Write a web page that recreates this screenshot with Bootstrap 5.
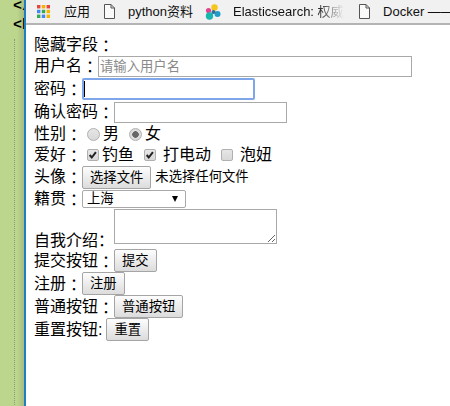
<!DOCTYPE html>
<html lang="zh">
<head>
<meta charset="utf-8">
<title>表单</title>
<link href="https://cdn.jsdelivr.net/npm/bootstrap@5.3.0/dist/css/bootstrap.min.css" rel="stylesheet">
<style>
html,body{height:100%;margin:0;overflow:hidden}
body{font-family:"Liberation Sans","Noto Sans CJK SC",sans-serif;font-size:16px;color:#000;background:#fff}
.shell{height:406px}
.gutter{width:24px;flex:none;background:linear-gradient(90deg,#bdd68d 0,#bdd68d 70%,#a9bd7e 100%);font:bold 15px/19px "Liberation Mono",monospace;color:#000;padding:0 0 0 13px;overflow:hidden;white-space:nowrap}
.gut-lines{margin-top:-3px}
.gutter-dots{margin:4px 0 0 1px;border-left:1px dotted #8a9a80;height:370px}
.mainpane{flex:1;min-width:0;border-left:2px solid #1f7fc0}
.bookbar{height:25px;background:#f1f1f1;border-bottom:2px solid #b4b4b4;font-size:13px;color:#111;white-space:nowrap;overflow:hidden;padding-left:11px}
.bookbar>*{flex:none}
.bookbar span{line-height:22px}
.ico-apps{margin-right:14px}
.ico-doc{margin:0 13px 0 14px}
.ico-doc-b{margin:0 13px 0 15px}
.ico-dots{margin:0 12px 0 12px}
.fade-text{width:111px;overflow:hidden;-webkit-mask-image:linear-gradient(90deg,#000 75%,transparent);mask-image:linear-gradient(90deg,#000 75%,transparent)}
.formpane{padding:9.5px 0 0 8px;line-height:18px}
.frow{display:flex;align-items:center;white-space:nowrap;height:21px}
.h-wide{height:25px}
.h-mid{height:23px}
.h-slim{height:19px}
.frow-ta{align-items:flex-start;height:40.5px}
.ta-label{margin-top:21.5px}
.col-mark{font-family:"Noto Sans CJK TC",sans-serif}
.tin{box-sizing:border-box;height:21px;border:1px solid #a9a9a9;padding:1px 1px;font-size:13.33px;outline:0;background:#fff}
.tin::placeholder{color:#8a8a8a;opacity:1}
.tin-long{width:314px}
.tin-short{width:173px}
.tin-focus{border:2px solid #7ea6e8;border-radius:2px;height:22px}
.caret-mark{border-left:1px solid #000;height:16px;margin-left:-171px;margin-right:170px}
.rd,.ck{appearance:none;-webkit-appearance:none;margin:0;flex:none;height:12px;border:1px solid #b0b0b0;background:linear-gradient(#e6e6e6,#d8d8d8)}
.rd{width:13px;height:13px;border-radius:50%}
.rd:checked{background:radial-gradient(circle,#666 0 3px,#dcdcdc 3.5px)}
.ck{width:12px;border-radius:2px}
.ck:checked{background:url("data:image/svg+xml,%3Csvg xmlns='http://www.w3.org/2000/svg' viewBox='0 0 12 12'%3E%3Cpath d='M2 6l2.500 3 5-6.500' fill='none' stroke='%23222' stroke-width='2.400'/%3E%3C/svg%3E") center/100% no-repeat,linear-gradient(#e6e6e6,#d8d8d8)}
.oldbtn{box-sizing:border-box;height:23px;padding:0 7px;font-size:13.33px;line-height:19px;color:#000;background:linear-gradient(#fdfdfd,#dcdcdc);border:1px solid #a5a5a5;border-radius:2px}
.filetxt{font-size:13.33px;margin-left:4px}
.oldsel{box-sizing:border-box;width:104px;height:18px;border:1px solid #a9a9a9;border-radius:2px;background:#fff;font-size:13.33px;line-height:16px;padding:0 4px;display:flex;justify-content:space-between;align-items:center}
.sel-arrow{width:0;height:0;border:3.500px solid transparent;border-top:6px solid #000;border-bottom:0;margin-right:3px}
.tarea{box-sizing:border-box;width:163px;height:35px;border:1px solid #a9a9a9;resize:both;outline:0;display:block}
.gap-s{margin-left:3px}
.gap-m{margin-left:7px}
.gap-l{margin-left:10px}
.first-tick{margin-left:5px}
.reset-gap{margin-left:4px}
</style>
</head>
<body>
<div class="d-flex shell">
  <div class="gutter">
    <div class="gut-lines">&lt;/</div>
    <div>&lt;b</div>
    <div class="gutter-dots"></div>
  </div>
  <div class="mainpane">
    <div class="d-flex align-items-center bookbar">
      <svg class="ico-apps" width="13" height="13" viewBox="0 0 13 13"><g>
        <rect width="3.400" height="3.400" fill="#e8453c"/><rect x="4.800" width="3.400" height="3.400" fill="#f4b400"/><rect x="9.600" width="3.400" height="3.400" fill="#e8453c"/>
        <rect y="4.800" width="3.400" height="3.400" fill="#4285f4"/><rect x="4.800" y="4.800" width="3.400" height="3.400" fill="#34a853"/><rect x="9.600" y="4.800" width="3.400" height="3.400" fill="#f4b400"/>
        <rect y="9.600" width="3.400" height="3.400" fill="#34a853"/><rect x="4.800" y="9.600" width="3.400" height="3.400" fill="#4285f4"/><rect x="9.600" y="9.600" width="3.400" height="3.400" fill="#f4b400"/></g></svg>
      <span>应用</span>
      <svg class="ico-doc" width="11" height="15" viewBox="0 0 11 15"><path d="M.5.500h6.500l3.500 3.500v10.500h-10zM7 .5v3.500h3.500" fill="#fafafa" stroke="#555"/></svg>
      <span>python资料</span>
      <svg class="ico-dots" width="16" height="16" viewBox="0 0 16 16"><circle cx="9.500" cy="3.500" r="3.200" fill="#f5c518"/><circle cx="3.500" cy="6.500" r="2.600" fill="#e2458e"/><circle cx="4.500" cy="12" r="3.700" fill="#19b5b0"/><circle cx="12.500" cy="10" r="3" fill="#1f9cc9"/><circle cx="8.500" cy="8" r="2" fill="#2a6f97"/></svg>
      <span class="fade-text">Elasticsearch: 权威指南</span>
      <svg class="ico-doc-b" width="11" height="15" viewBox="0 0 11 15"><path d="M.5.500h6.500l3.500 3.500v10.500h-10zM7 .5v3.500h3.500" fill="#fafafa" stroke="#555"/></svg>
      <span>Docker ——</span>
    </div>
    <form class="formpane">
      <div class="frow">隐藏字段<span class="col-mark">：</span></div>
      <div class="frow">用户名<span class="col-mark">：</span><input class="tin tin-long" placeholder="请输入用户名"></div>
      <div class="frow h-wide">密码<span class="col-mark">：</span><input class="tin tin-short tin-focus" type="password"><span class="caret-mark"></span></div>
      <div class="frow">确认密码<span class="col-mark">：</span><input class="tin tin-short" type="password"></div>
      <div class="frow h-mid">性别<span class="col-mark">：</span><input class="rd first-tick" type="radio" name="sex"><span class="gap-s">男</span><input class="rd gap-l" type="radio" name="sex" checked><span class="gap-s">女</span></div>
      <div class="frow h-slim">爱好<span class="col-mark">：</span><input class="ck first-tick" type="checkbox" checked><span class="gap-s">钓鱼</span><input class="ck gap-l" type="checkbox" checked><span class="gap-m">打电动</span><input class="ck gap-l" type="checkbox"><span class="gap-m">泡妞</span></div>
      <div class="frow h-wide">头像<span class="col-mark">：</span><button class="oldbtn" type="button">选择文件</button><span class="filetxt">未选择任何文件</span></div>
      <div class="frow h-slim">籍贯<span class="col-mark">：</span><div class="oldsel"><span>上海</span><span class="sel-arrow"></span></div></div>
      <div class="frow frow-ta"><span class="ta-label">自我介绍<span class="col-mark">：</span></span><textarea class="tarea"></textarea></div>
      <div class="frow h-mid">提交按钮<span class="col-mark">：</span><button class="oldbtn" type="button">提交</button></div>
      <div class="frow h-mid">注册<span class="col-mark">：</span><button class="oldbtn" type="button">注册</button></div>
      <div class="frow h-mid">普通按钮<span class="col-mark">：</span><button class="oldbtn" type="button">普通按钮</button></div>
      <div class="frow h-mid">重置按钮:<button class="oldbtn reset-gap" type="button">重置</button></div>
    </form>
  </div>
</div>
</body>
</html>
